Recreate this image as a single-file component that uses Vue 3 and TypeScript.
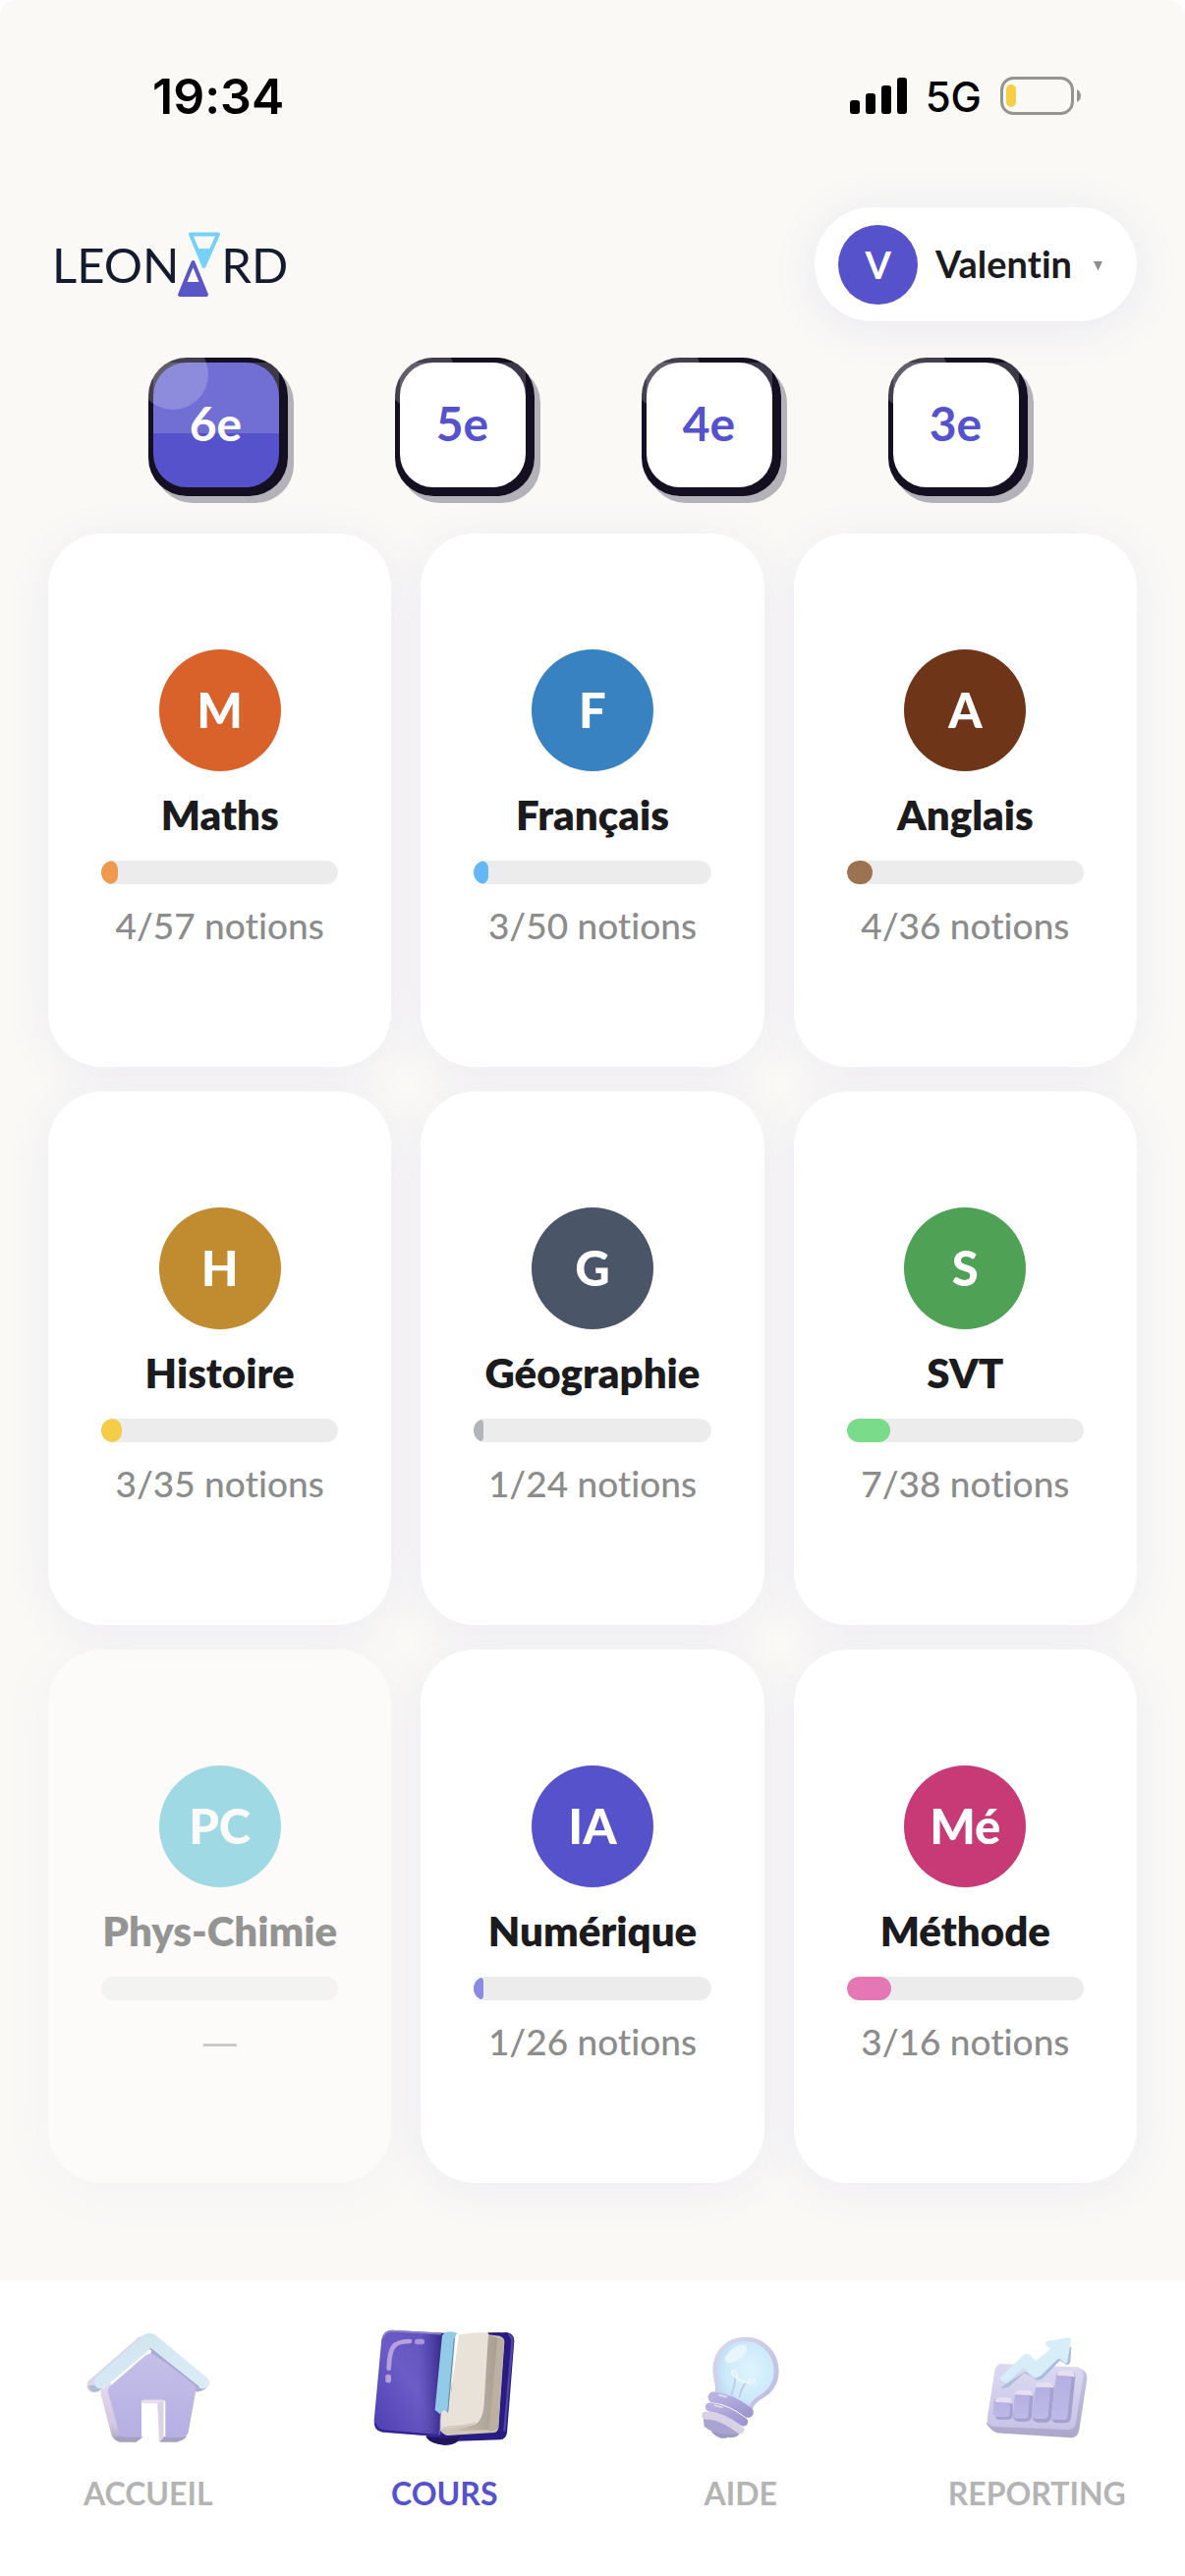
<script setup lang="ts">
import { ref } from 'vue'

interface Subject {
  short: string
  name: string
  color: string
  fill: string
  done: number
  total: number
}

const levels: string[] = ['6e', '5e', '4e', '3e']
const activeLevel = ref<string>('6e')

const subjects: Subject[] = [
  { short: 'M', name: 'Maths', color: '#d8622a', fill: '#ef994f', done: 4, total: 57 },
  { short: 'F', name: 'Français', color: '#3882c2', fill: '#63b8f3', done: 3, total: 50 },
  { short: 'A', name: 'Anglais', color: '#6e3519', fill: '#9c7250', done: 4, total: 36 },
  { short: 'H', name: 'Histoire', color: '#c08c2f', fill: '#f5cc46', done: 3, total: 35 },
  { short: 'G', name: 'Géographie', color: '#4a5568', fill: '#b2b3bb', done: 1, total: 24 },
  { short: 'S', name: 'SVT', color: '#4ea155', fill: '#7adc8a', done: 7, total: 38 },
  { short: 'PC', name: 'Phys-Chimie', color: '#32b4ce', fill: '#32b4ce', done: 0, total: 0 },
  { short: 'IA', name: 'Numérique', color: '#5552cc', fill: '#8c89e0', done: 1, total: 26 },
  { short: 'Mé', name: 'Méthode', color: '#c73a76', fill: '#e677b5', done: 3, total: 16 },
]

const percent = (s: Subject): number => (s.total ? (s.done / s.total) * 100 : 0)
</script>

<template>
  <div class="page">
    <div class="status">
      <span class="time">19:34</span>
      <div class="status-right">
        <svg class="signal" width="58" height="38" viewBox="0 0 58 38" aria-hidden="true">
          <rect x="0" y="23" width="10" height="14" rx="3" />
          <rect x="16" y="16" width="10" height="21" rx="3" />
          <rect x="32" y="8" width="10" height="29" rx="3" />
          <rect x="48" y="0" width="10" height="37" rx="3" />
        </svg>
        <span class="network">5G</span>
        <svg class="battery" width="83" height="40" viewBox="0 0 83 40" aria-hidden="true">
          <rect x="1.5" y="1.5" width="72" height="36" rx="12" fill="none" stroke="#959492" stroke-width="3" />
          <rect x="6" y="8" width="10" height="23" rx="5" fill="#f8ce46" />
          <path d="M78 13q4 2 4 6.500t-4 6.500z" fill="#959492" />
        </svg>
      </div>
    </div>

    <header class="header">
      <a class="logo" href="#" aria-label="Leonard">
        <span>LEON</span>
        <svg class="logo-mark" width="46" height="68" viewBox="0 0 46 68" aria-hidden="true">
          <path d="M14 3.500h28L27.500 36z" fill="none" stroke="#76d1f6" stroke-width="4" stroke-linejoin="round" />
          <path d="M20 18h16L27.500 37z" fill="#76d1f6" />
          <path d="M3 65h27L16.500 32z" fill="none" stroke="#5a56c6" stroke-width="4" stroke-linejoin="round" />
          <path d="M8 52h17l5.500 13.500h-28z" fill="#5a56c6" />
        </svg>
        <span>RD</span>
      </a>
      <button class="profile" type="button">
        <span class="avatar">V</span>
        <span class="profile-name">Valentin</span>
        <svg class="caret" width="10" height="10" viewBox="0 0 10 10" aria-hidden="true">
          <path d="M0 0h9L4.500 9.500z" fill="#8e8e8e" />
        </svg>
      </button>
    </header>

    <div class="levels">
      <button
        v-for="level in levels"
        :key="level"
        type="button"
        class="level"
        :class="{ active: level === activeLevel }"
        :aria-pressed="level === activeLevel"
        @click="activeLevel = level"
      >
        <span class="face">
          <span class="panel"><span class="level-text">{{ level }}</span></span>
        </span>
      </button>
    </div>

    <main class="grid">
      <button
        v-for="s in subjects"
        :key="s.name"
        type="button"
        class="card"
        :class="{ locked: s.total === 0 }"
      >
        <span class="badge" :style="{ background: s.color }">{{ s.short }}</span>
        <span class="name">{{ s.name }}</span>
        <span class="track">
          <span class="fill" :style="{ width: percent(s) + '%', background: s.fill }"></span>
        </span>
        <span v-if="s.total" class="note">{{ s.done }}/{{ s.total }} notions</span>
        <span v-else class="note empty">—</span>
      </button>
    </main>

    <nav class="nav">
      <a href="#accueil" class="nav-item">
        <svg class="nav-icon" viewBox="108 201 450 378" aria-hidden="true">
          <defs>
            <linearGradient id="h-roof" x1="0" y1="0" x2="1" y2="1">
              <stop offset="0" stop-color="#cfe4ef" />
              <stop offset="1" stop-color="#dcedf7" />
            </linearGradient>
            <linearGradient id="h-wall" x1="0" y1="0" x2="0" y2="1">
              <stop offset="0" stop-color="#c5c0e8" />
              <stop offset="1" stop-color="#b5afe3" />
            </linearGradient>
            <linearGradient id="h-side" x1="0" y1="0" x2="0" y2="1">
              <stop offset="0" stop-color="#e5d9ea" />
              <stop offset=".7" stop-color="#d3c8e3" />
              <stop offset="1" stop-color="#a9a4c2" />
            </linearGradient>
          </defs>
          <path d="M148 372L304 236l30-8-120 146-48 31q-18 0-21-18z" fill="#dcd6ea" />
          <path d="M150 385q4 20 18 20 12 0 25-12l-8-12z" fill="#aebdd6" />
          <path d="M188 398l30-22 40 170-10 11q-20-3-27-20l-33-124z" fill="url(#h-side)" />
          <path d="M229 540h85v4l-18 13h-48q-13-1-19-17zM372 540h78q-8 11-30 17h-48q-5 0-6-6z" fill="#a5a1bf" />
          <path d="M314 428h66v116l-10 10q-5 0-5-7l-4-108h-48z" fill="#eadde9" />
          <path d="M361 438l17-7v116l-10 6z" fill="#ddd1e6" />
          <path d="M480 404q30-3 39-26l-175-108-6 26z" fill="#a9b0d6" />
          <path d="M325 292q13-10 27 0l118 84q10 9 8 24l-22 122q-3 21-22 21h-49V436q0-8-9-8h-57q-7 0-7 8v106h-48q-17-2-22-20l-32-118q-2-10 6-18z" fill="url(#h-wall)" />
          <path d="M321 229q16-10 32 0l158 130q15 13 4 28-12 12-28 4L340 272 203 387q-15 12-29 2-15-14 0-31z" fill="url(#h-roof)" />
          <path d="M338 271l149 119" stroke="#a9a8d4" stroke-width="5" fill="none" />
        </svg>
        <span>ACCUEIL</span>
      </a>
      <a href="#cours" class="nav-item active">
        <svg class="nav-icon" viewBox="112 201 450 378" aria-hidden="true">
          <defs>
            <linearGradient id="b-cover" x1="1" y1="0" x2="0" y2="1">
              <stop offset="0" stop-color="#5d4eb8" />
              <stop offset=".5" stop-color="#6c5cc6" />
              <stop offset="1" stop-color="#4e3db2" />
            </linearGradient>
            <linearGradient id="b-spine" x1="0" y1="0" x2="1" y2="0">
              <stop offset="0" stop-color="#5446b6" stop-opacity="0" />
              <stop offset="1" stop-color="#32247f" />
            </linearGradient>
            <linearGradient id="b-inner" x1="0" y1="0" x2="1" y2="0">
              <stop offset="0" stop-color="#c7beb0" />
              <stop offset="1" stop-color="#a99f92" />
            </linearGradient>
          </defs>
          <path d="M470 223l58-1q24 4 23 27l-22 280q-3 20-22 21l-127 4q-16 13-40 12-45-2-58-26l40-100z" fill="#281c83" />
          <path d="M534 228q12 8 11 24l-24 272" fill="none" stroke="#5145a4" stroke-width="7" />
          <path d="M280 540q60 12 108-4l-12 20q-16 10-38 10-40-2-58-26z" fill="#21165c" />
          <path d="M178 215l166 9-18 310-10 6-168-13q-27-5-25-36l23-247q5-28 32-29z" fill="url(#b-cover)" />
          <path d="M270 222l66 3-15 312-68-6z" fill="url(#b-spine)" />
          <path d="M150 238q8-20 28-20l150 9" fill="none" stroke="#8a80cf" stroke-width="5" />
          <path d="M127 500q3 20 25 23l165 14" fill="none" stroke="#2f2191" stroke-width="6" />
          <path d="M168 332q2-50 14-66 10-16 50-17" fill="none" stroke="#b6a0df" stroke-width="14" stroke-linecap="round" />
          <rect x="247" y="242" width="30" height="17" rx="8" fill="#a995d8" />
          <rect x="158" y="350" width="17" height="26" rx="8" fill="#b6a0df" />
          <path d="M472 229l34 4q16 6 15 18l-18 262q-2 14-13 15l-143 9q-16-4-20-14l28-40z" fill="#d0c7b8" />
          <path d="M490 236l-18 288q18 4 30-8l18-268q-8-10-30-12z" fill="#bcb0a2" />
          <path d="M470 232q18-2 30 8l-26 280-104 3 60-20z" fill="url(#b-inner)" />
          <path d="M382 229q46-8 88-7 5 4 1 20l-12 198q-4 56-32 64-36 6-70 9-24 2-33 10 2-18 21-20z" fill="#e9e2d9" />
          <path d="M372 232l-20 270q-22 10-25 24-2-20-1-40l24-250z" fill="#e9e2d9" />
          <path d="M327 520q10-10 40-11 45-2 66-12" fill="none" stroke="#d0c6ba" stroke-width="4" />
          <path d="M342 222q20-6 36 3-8 6-9 16l-20 226-12-8-13 12-15-12 22-228z" fill="#92cbe8" />
          <path d="M368 240l-20 226" stroke="#5f89a8" stroke-width="3" />
        </svg>
        <span>COURS</span>
      </a>
      <a href="#aide" class="nav-item">
        <svg class="nav-icon" viewBox="57 201 450 378" aria-hidden="true">
          <defs>
            <radialGradient id="l-glass" cx=".58" cy=".45" r=".6">
              <stop offset="0" stop-color="#def5fd" />
              <stop offset=".7" stop-color="#cdeafa" />
              <stop offset="1" stop-color="#c0daf1" />
            </radialGradient>
            <linearGradient id="l-rim" x1="0" y1="0" x2="1" y2="1">
              <stop offset="0" stop-color="#d8daee" />
              <stop offset="1" stop-color="#bdb9df" />
            </linearGradient>
            <linearGradient id="l-base" x1="0" y1="0" x2="1" y2="1">
              <stop offset="0" stop-color="#b9b2e0" />
              <stop offset="1" stop-color="#9f97cf" />
            </linearGradient>
          </defs>
          <path d="M295 236c58 0 103 46 103 104 0 42-22 70-54 86q-20 12-29 34l-115-46q8-20 0-46c-18-75 30-132 95-132z" fill="url(#l-rim)" />
          <path d="M293 249c52 0 90 42 90 91 0 38-19 60-45 75-17 10-27 22-31 35l-95-40q6-25-2-52c-11-62 25-109 83-109z" fill="url(#l-glass)" />
          <ellipse cx="267" cy="288" rx="39" ry="19" fill="#e8f5fc" transform="rotate(-36 267 288)" />
          <path d="M253 414q13-36 12-64M277 422q6-30 20-46" fill="none" stroke="#bfc8e7" stroke-width="5" />
          <path d="M269 361q-20-15-12-22 10-4 15 25 13 9 29 9 24-16 24-4-2 14-26 4" fill="none" stroke="#ecf6fb" stroke-width="6" stroke-linecap="round" />
          <path d="M168 488q4 22 20 28 10 24 34 29 12 2 20-3 28 4 36-12l-40-34z" fill="#9c98c4" />
          <path d="M168 486q34-10 112 40l-4 7q-74 6-106-24z" fill="#a8a3d0" />
          <g fill="none" stroke-linecap="round">
            <path d="M175 476q45-2 105 44" stroke="#d9d2e7" stroke-width="24" />
            <path d="M187 450q50 6 103 45" stroke="url(#l-base)" stroke-width="27" />
            <path d="M198 420q55 6 106 46" stroke="url(#l-base)" stroke-width="33" />
            <path d="M216 413l22 6M204 445l20 6" stroke="#dedaf0" stroke-width="6" />
          </g>
        </svg>
        <span>AIDE</span>
      </a>
      <a href="#reporting" class="nav-item">
        <svg class="nav-icon" viewBox="151 201 450 378" aria-hidden="true">
          <defs>
            <linearGradient id="c-board" x1="0" y1="0" x2="0" y2="1">
              <stop offset="0" stop-color="#dcdaf1" />
              <stop offset="1" stop-color="#c6c3e7" />
            </linearGradient>
            <linearGradient id="c-edge" x1="0" y1="0" x2="0" y2="1">
              <stop offset="0" stop-color="#c9c5e8" />
              <stop offset="1" stop-color="#aba7c9" />
            </linearGradient>
            <linearGradient id="c-bar" x1="0" y1="0" x2="0" y2="1">
              <stop offset="0" stop-color="#b4afe0" />
              <stop offset="1" stop-color="#bdb9e8" />
            </linearGradient>
          </defs>
          <path d="M280 325l232 8q20 10 18 31l-24 156q-4 24-25 24l-226-15q-14-3-32-27z" fill="url(#c-edge)" />
          <path d="M268 318l230 10q22 3 20 28l-22 142q-4 22-25 21l-222-9q-26-2-24-24l23-146q4-20 20-22z" fill="url(#c-board)" />
          <path d="M273 392q10 2 20-5l50-46 28 25q12 5 24-4l52-54 20 13q10 0 12-9l3-48-20 20-90 80-35-20-70 46z" fill="#a9bddd" />
          <path d="M264 361l72-70q10-8 19 1l19 17 44-37-14-12q-4-8 6-11l64-11q8-1 7 8l-11 66q-3 8-10 2l-17-13-54 53q-14 10-28-1l-26-23-45 43q-8 7-14 0l-13-7q-2-3 1-5z" fill="#d7edf7" />
          <g fill="#a5a0cc">
            <rect x="249" y="426" width="54" height="62" rx="13" />
            <path d="M318 402h36q12 2 12 15l-5 61q-2 16-16 16h-26q-12-2-15-14z" />
            <path d="M384 378h34q12 3 12 14l-9 88q-2 16-16 17h-27q-12-2-15-14z" />
            <path d="M450 343h33q12 3 11 16l-13 124q-3 16-17 16h-27q-12-2-15-14z" />
          </g>
          <g fill="url(#c-bar)">
            <path d="M252 424h34q9 2 9 11l-1 38q-2 7-9 7h-32q-10-2-10-10l2-38z" />
            <path d="M316 402h31q9 2 8 11l-5 66q-2 6-9 6h-28q-10-2-9-10l6-66z" />
            <path d="M380 377h31q9 2 8 11l-8 90q-2 7-9 8h-31q-10-2-9-11l11-90z" />
            <path d="M445 342h30q9 2 8 11l-13 127q-2 8-9 9h-31q-10-2-9-11l15-127z" />
          </g>
          <g fill="#e7dff1">
            <path d="M249 434q2-13 13-13h27q12 2 13 20l-7-4z" />
            <path d="M309 412q3-13 14-13h29q12 2 13 18l-9-3z" />
            <path d="M372 389q3-14 14-14h27q14 2 16 18l-9-3z" />
            <path d="M438 353q3-14 14-14h25q14 2 16 20l-9-3z" />
          </g>
        </svg>
        <span>REPORTING</span>
      </a>
    </nav>
  </div>
</template>

<style>
body {
  background: #fff;
}
</style>

<style scoped>
.page {
  min-height: 100vh;
  display: flex;
  flex-direction: column;
  background: #faf9f6;
  border-radius: 16px 16px 0 0;
  overflow: hidden;
  font-family: Lato, "Open Sans", sans-serif;
  font-variant-ligatures: none;
  color: #1b1b1d;
}

button {
  margin: 0;
  padding: 0;
  border: 0;
  background: none;
  font: inherit;
  font-variant-ligatures: none;
  color: inherit;
  cursor: pointer;
}

.status {
  display: flex;
  align-items: center;
  justify-content: space-between;
  padding: 66px 105px 0 155px;
  height: 64px;
  color: #000;
  font-family: Inter, sans-serif;
}

.time {
  font-size: 50px;
  font-weight: 600;
}

.status-right {
  display: flex;
  align-items: center;
  gap: 19px;
}

.network {
  font-size: 42px;
  font-weight: 500;
}

.header {
  display: flex;
  align-items: center;
  justify-content: space-between;
  padding: 81px 49px 0 53px;
}

.logo {
  display: flex;
  align-items: center;
  color: #151b2e;
  font-size: 49px;
  line-height: 60px;
  text-decoration: none;
}

.logo-mark {
  margin: 0 -1px 0 -2px;
}

.profile {
  display: flex;
  align-items: center;
  height: 116px;
  padding: 0 34px 0 24px;
  gap: 18px;
  border-radius: 58px;
  background: #fff;
  box-shadow: 0 6px 48px rgba(85, 82, 204, 0.1);
  font-size: 38px;
  font-weight: 700;
}

.profile-name {
  padding-bottom: 2px;
}

.avatar {
  display: grid;
  place-items: center;
  width: 81px;
  height: 81px;
  border-radius: 50%;
  background: #5552cc;
  color: #fff;
}

.caret {
  margin: 4px 0 0 4px;
}

.levels {
  display: flex;
  justify-content: space-around;
  padding: 37px 106px 0 96px;
}

.level {
  border-radius: 39px;
  box-shadow: 6px 7px 0 #b3b2b8;
  color: #5552cc;
  font-size: 48px;
  font-weight: 700;
}

.face {
  position: relative;
  display: block;
  padding: 5px 9px 9px 5px;
  border-radius: 39px;
  background: #141022;
  overflow: hidden;
}

.face::before,
.face::after {
  content: "";
  position: absolute;
}

.face::before {
  inset: 5px 9px 50% 5px;
  height: 72px;
  background: rgba(255, 255, 255, 0.17);
}

.face::after {
  left: -11px;
  top: -19px;
  width: 72px;
  height: 72px;
  border-radius: 50%;
  background: rgba(255, 255, 255, 0.2);
}

.panel {
  display: grid;
  place-items: center;
  width: 128px;
  height: 127px;
  border-radius: 34px;
  background: #fff;
}

.level-text {
  position: relative;
  z-index: 1;
  padding-bottom: 4px;
}

.active .panel {
  background: #5552cc;
  color: #fff;
}

.grid {
  display: grid;
  grid-template-columns: repeat(3, 1fr);
  gap: 25px 30px;
  padding: 38px 49px 99px;
}

.card {
  display: flex;
  flex-direction: column;
  align-items: center;
  gap: 18px;
  padding: 118px 54px;
  border-radius: 55px;
  background: #fff;
  box-shadow: 0 6px 48px rgba(85, 82, 204, 0.08);
}

.locked {
  opacity: 0.45;
}

.badge {
  display: grid;
  place-items: center;
  box-sizing: border-box;
  width: 124px;
  height: 124px;
  padding-bottom: 3px;
  border-radius: 50%;
  color: #fff;
  font-size: 49px;
  font-weight: 900;
}

.name {
  padding-bottom: 3px;
  font-size: 42px;
  font-weight: 800;
  line-height: 52px;
  white-space: nowrap;
}

.track {
  display: block;
  width: 100%;
  height: 24px;
  border-radius: 12px;
  background: #ececec;
  overflow: hidden;
}

.fill {
  display: block;
  height: 100%;
  border-radius: 12px;
}

.note {
  padding-bottom: 2px;
  color: #8c8c8c;
  font-size: 37px;
  font-weight: 500;
  line-height: 48px;
  white-space: nowrap;
}

.empty {
  font-family: "Open Sans", sans-serif;
}

.nav {
  display: grid;
  grid-template-columns: repeat(4, 1fr);
  margin-top: auto;
  padding: 46px 0 64px;
  background: #fff;
}

.nav-item {
  display: flex;
  flex-direction: column;
  align-items: center;
  gap: 25px;
  color: #b4b4b4;
  font-size: 32px;
  font-weight: 700;
  line-height: 40px;
  text-decoration: none;
}

.nav-item.active {
  color: #5552cc;
}

.nav-icon {
  width: 150px;
  height: 126px;
}
</style>
